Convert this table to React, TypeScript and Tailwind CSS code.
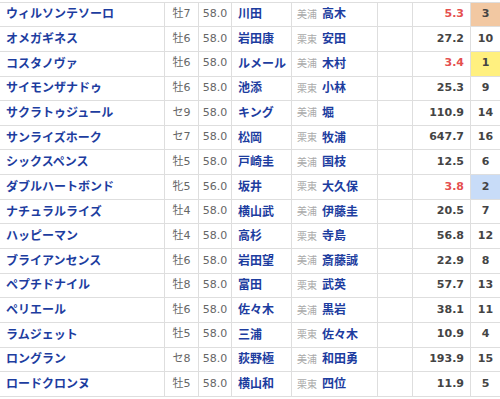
type Row = {
  name: string
  sex: string
  weight: string
  jockey: string
  area: string
  trainer: string
  odds: string
  pop: number
}

const rows: Row[] = [
  { name: 'ウィルソンテソーロ', sex: '牡7', weight: '58.0', jockey: '川田', area: '美浦', trainer: '高木', odds: '5.3', pop: 3 },
  { name: 'オメガギネス', sex: '牡6', weight: '58.0', jockey: '岩田康', area: '栗東', trainer: '安田', odds: '27.2', pop: 10 },
  { name: 'コスタノヴァ', sex: '牡6', weight: '58.0', jockey: 'ルメール', area: '美浦', trainer: '木村', odds: '3.4', pop: 1 },
  { name: 'サイモンザナドゥ', sex: '牡6', weight: '58.0', jockey: '池添', area: '栗東', trainer: '小林', odds: '25.3', pop: 9 },
  { name: 'サクラトゥジュール', sex: 'セ9', weight: '58.0', jockey: 'キング', area: '美浦', trainer: '堀', odds: '110.9', pop: 14 },
  { name: 'サンライズホーク', sex: 'セ7', weight: '58.0', jockey: '松岡', area: '栗東', trainer: '牧浦', odds: '647.7', pop: 16 },
  { name: 'シックスペンス', sex: '牡5', weight: '58.0', jockey: '戸崎圭', area: '美浦', trainer: '国枝', odds: '12.5', pop: 6 },
  { name: 'ダブルハートボンド', sex: '牝5', weight: '56.0', jockey: '坂井', area: '栗東', trainer: '大久保', odds: '3.8', pop: 2 },
  { name: 'ナチュラルライズ', sex: '牡4', weight: '58.0', jockey: '横山武', area: '美浦', trainer: '伊藤圭', odds: '20.5', pop: 7 },
  { name: 'ハッピーマン', sex: '牡4', weight: '58.0', jockey: '高杉', area: '栗東', trainer: '寺島', odds: '56.8', pop: 12 },
  { name: 'ブライアンセンス', sex: '牡6', weight: '58.0', jockey: '岩田望', area: '美浦', trainer: '斎藤誠', odds: '22.9', pop: 8 },
  { name: 'ペプチドナイル', sex: '牡8', weight: '58.0', jockey: '富田', area: '栗東', trainer: '武英', odds: '57.7', pop: 13 },
  { name: 'ペリエール', sex: '牡6', weight: '58.0', jockey: '佐々木', area: '美浦', trainer: '黒岩', odds: '38.1', pop: 11 },
  { name: 'ラムジェット', sex: '牡5', weight: '58.0', jockey: '三浦', area: '栗東', trainer: '佐々木', odds: '10.9', pop: 4 },
  { name: 'ロングラン', sex: 'セ8', weight: '58.0', jockey: '荻野極', area: '美浦', trainer: '和田勇', odds: '193.9', pop: 15 },
  { name: 'ロードクロンヌ', sex: '牡5', weight: '58.0', jockey: '横山和', area: '栗東', trainer: '四位', odds: '11.9', pop: 5 },
]

function popBg(p: number) {
  if (p === 1) return 'bg-[#fff07f]'
  if (p === 2) return 'bg-[#c8dcf8]'
  if (p === 3) return 'bg-[#f2c8a2]'
  return ''
}

const jp = "font-['DejaVu_Sans','Noto_Sans_CJK_JP',sans-serif]"

export default function App() {
  return (
    <div className={`w-[500px] h-[399px] overflow-hidden bg-white ${jp}`}>
      <div className="h-[2.6px] border-b border-[#dedede]" />
      {rows.map((r) => (
        <div
          key={r.name}
          className="grid h-[24.65px] grid-cols-[165px_34px_33px_60px_86px_35px_58px_29px] border-b border-[#dedede] items-stretch"
        >
          <div className="flex items-center border-r border-[#dedede] pl-[6px] text-[12px] font-bold text-[#1d3d9f]">
            {r.name}
          </div>
          <div className="flex items-center justify-center border-r border-[#dedede] text-[11px] text-[#666]">
            {r.sex}
          </div>
          <div className="flex items-center justify-center border-r border-[#dedede] text-[11px] text-[#666]">
            {r.weight}
          </div>
          <div className="flex items-center border-r border-[#dedede] pl-[6px] text-[12px] font-bold text-[#1d3d9f] whitespace-nowrap overflow-hidden">
            {r.jockey}
          </div>
          <div className="flex items-center gap-[5px] border-r border-[#dedede] pl-[5px] whitespace-nowrap">
            <span className="text-[10px] text-[#aaa]">{r.area}</span>
            <span className="text-[12px] font-bold text-[#1d3d9f]">{r.trainer}</span>
          </div>
          <div className="border-r border-[#dedede]" />
          <div
            className={`flex items-center justify-end border-r border-[#dedede] pr-[6px] text-[11px] font-bold ${
              parseFloat(r.odds) < 10 ? 'text-[#e5504f]' : 'text-[#444]'
            }`}
          >
            {r.odds}
          </div>
          <div className={`flex items-center justify-center text-[11px] font-bold text-[#444] ${popBg(r.pop)}`}>
            {r.pop}
          </div>
        </div>
      ))}
    </div>
  )
}
